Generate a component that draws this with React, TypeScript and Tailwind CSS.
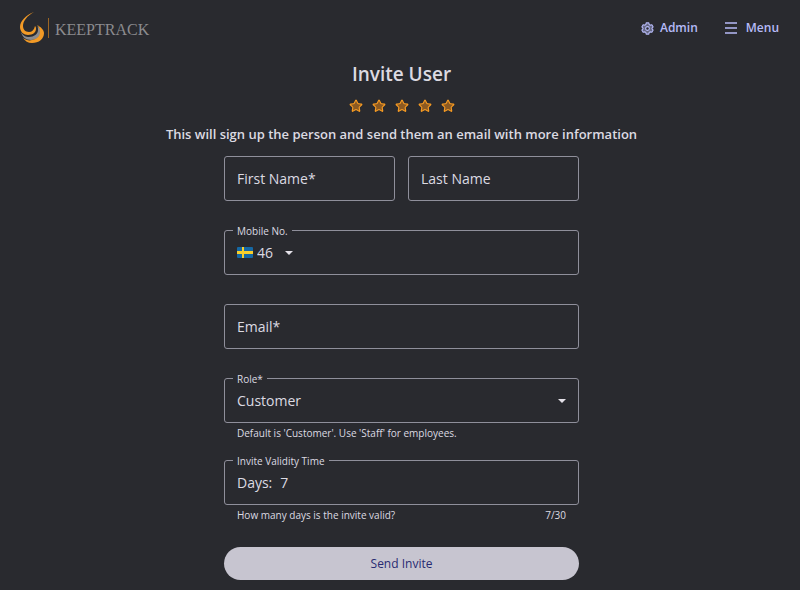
import { useState, type ReactNode } from 'react';
import { Star } from 'lucide-react';

const boxClass = 'relative flex h-[45px] items-center rounded-[3px] border border-[#8f8f9b]';
const notchClass = 'absolute -top-2 left-2 bg-[#292a2f] px-1 text-[10px] leading-4 font-medium';
const helperClass = 'flex justify-between px-[13px] pt-0.5 text-[10px] leading-4 font-medium';

function Logo() {
  return (
    <a href="#" className="flex items-center text-[#8b8b8e]">
      <svg width="24" height="32" viewBox="0 0 24 32" aria-hidden="true">
        <path d="M14 0C6 3 0 9 0 15c0 5 4 8 8 8 5 0 8-3 8-6 0-1 0-2-1-3-1 4-3 6-6 6-4 0-6-3-6-6C3 9 7 4 14 0z" fill="#f29a26" />
        <path d="M1 20c2 4 5 5 8 5 5 0 9-3 9-7 0-2 0-3-1-4 3 2 4 4 4 6-1 5-5 8-10 8-5 0-9-3-10-8z" fill="#8b8b8e" />
        <path d="M3 26c3 2 6 3 9 2 5-1 8-4 8-8 0-3-1-5-3-7 4 2 7 5 7 8 0 6-5 10-12 10-4 0-7-2-9-5z" fill="#f29a26" />
      </svg>
      <span className="ml-1 h-5 w-px bg-[#9c6624]" />
      <span className="ml-1.5 pt-1 font-['Liberation_Serif',serif] text-base">KEEPTRACK</span>
    </a>
  );
}

function Gear() {
  return (
    <svg width="13" height="13" viewBox="0 0 14 14" fill="none" stroke="currentColor" aria-hidden="true">
      <path
        d="M5.6 1h2.8l.4 1.7 1.2.7 1.7-.5 1.4 2.4-1.2 1.2v1l1.2 1.2-1.4 2.4-1.7-.5-1.2.7-.4 1.700H5.600l-.4-1.700-1.200-.7-1.700.5L.9 8.700l1.200-1.200v-1L.9 5.300l1.400-2.400 1.700.5 1.200-.7z"
        fill="#bec2ff"
        fillOpacity="0.4"
        strokeWidth="1.2"
        strokeLinejoin="round"
      />
      <circle cx="7" cy="7" r="2" fill="#292a2f" strokeWidth="1.2" />
    </svg>
  );
}

function Caret() {
  return (
    <svg width="8" height="4" viewBox="0 0 8 4" aria-hidden="true">
      <path d="M0 0h8L4 4z" fill="#e4e1e9" />
    </svg>
  );
}

function Flag() {
  return (
    <svg width="16" height="11" viewBox="0 0 16 11" aria-hidden="true">
      <rect width="16" height="11" rx="1" fill="#1568a4" />
      <path d="M5 0h2v11H5zM0 4h16v3H0z" fill="#f7cf2c" />
    </svg>
  );
}

function TextField({ id, label, type = 'text' }: { id: string; label: string; type?: string }) {
  return (
    <div className={boxClass}>
      <input id={id} type={type} placeholder=" " className="peer h-full w-full bg-transparent px-3 text-sm outline-none" />
      <label
        htmlFor={id}
        className="pointer-events-none absolute -top-2 left-2 bg-[#292a2f] px-1 text-[10px] leading-4 peer-placeholder-shown:top-3 peer-placeholder-shown:text-sm peer-placeholder-shown:leading-5"
      >
        {label}
      </label>
    </div>
  );
}

function OutlinedField({ id, label, children }: { id: string; label: string; children: ReactNode }) {
  return (
    <div className={boxClass}>
      <label htmlFor={id} className={notchClass}>{label}</label>
      {children}
    </div>
  );
}

export default function App() {
  const [code, setCode] = useState('46');
  const [role, setRole] = useState('Customer');
  const [days, setDays] = useState('7');

  return (
    <div className="min-h-screen bg-[#292a2f] font-['Open_Sans',sans-serif] text-[#dcdae2]">
      <header className="flex h-14 items-center justify-between pr-[21px] pl-5">
        <Logo />
        <nav className="flex items-center gap-[26px] text-xs font-semibold text-[#b6baf8]">
          <a href="#" className="flex items-center gap-1.5">
            <Gear />
            Admin
          </a>
          <button type="button" className="flex items-center gap-2">
            <svg width="14" height="12" viewBox="0 0 14 12" aria-hidden="true">
              <path d="M1 1h12M1 6h12M1 11h12" stroke="currentColor" strokeWidth="1.5" />
            </svg>
            Menu
          </button>
        </nav>
      </header>

      <main className="flex flex-col items-center pb-2 pl-[3px]">
        <h1 className="mt-1 text-[19px] leading-7 font-semibold">Invite User</h1>
        <div className="mt-[11px] flex gap-[9px]" aria-hidden="true">
          {[1, 2, 3, 4, 5].map(n => (
            <Star key={n} size={14} fill="#8c5a22" stroke="#f59a23" strokeWidth={2} />
          ))}
        </div>
        <p className="mt-[11px] text-center text-[13px] leading-5 font-semibold">
          This will sign up the person and send them an email with more information
        </p>

        <form className="mt-3 w-full max-w-[355px]" onSubmit={e => e.preventDefault()}>
          <div className="grid grid-cols-2 gap-[13px]">
            <TextField id="firstName" label="First Name*" />
            <TextField id="lastName" label="Last Name" />
          </div>

          <div className="mt-[29px]">
            <OutlinedField id="mobile" label="Mobile No.">
              <div className="flex items-center pl-3">
                <Flag />
                <select
                  aria-label="Country code"
                  value={code}
                  onChange={e => setCode(e.target.value)}
                  className="ml-1 w-7 appearance-none bg-transparent text-sm outline-none"
                >
                  <option>46</option>
                  <option>47</option>
                  <option>45</option>
                </select>
                <Caret />
              </div>
              <input id="mobile" type="tel" className="h-full min-w-0 flex-1 bg-transparent px-3 text-sm outline-none" />
            </OutlinedField>
          </div>

          <div className="mt-[29px]">
            <TextField id="email" label="Email*" type="email" />
          </div>

          <div className="mt-[29px]">
            <OutlinedField id="role" label="Role*">
              <select
                id="role"
                value={role}
                onChange={e => setRole(e.target.value)}
                className="h-full w-full appearance-none bg-transparent px-3 text-sm outline-none"
              >
                <option>Customer</option>
                <option>Staff</option>
              </select>
              <span className="pointer-events-none absolute right-3">
                <Caret />
              </span>
            </OutlinedField>
            <p className={helperClass}>Default is 'Customer'. Use 'Staff' for employees.</p>
          </div>

          <div className="mt-[19px]">
            <OutlinedField id="days" label="Invite Validity Time">
              <span className="pl-3 text-sm">Days:</span>
              <input
                id="days"
                value={days}
                onChange={e => setDays(e.target.value)}
                className="h-full min-w-0 flex-1 bg-transparent px-2 text-sm outline-none"
              />
            </OutlinedField>
            <div className={helperClass}>
              <span>How many days is the invite valid?</span>
              <span>{days}/30</span>
            </div>
          </div>

          <button type="submit" className="mt-6 h-[33px] w-full rounded-full bg-[#c7c5d0] text-xs font-medium text-[#272b72]">
            Send Invite
          </button>
        </form>
      </main>
    </div>
  );
}
